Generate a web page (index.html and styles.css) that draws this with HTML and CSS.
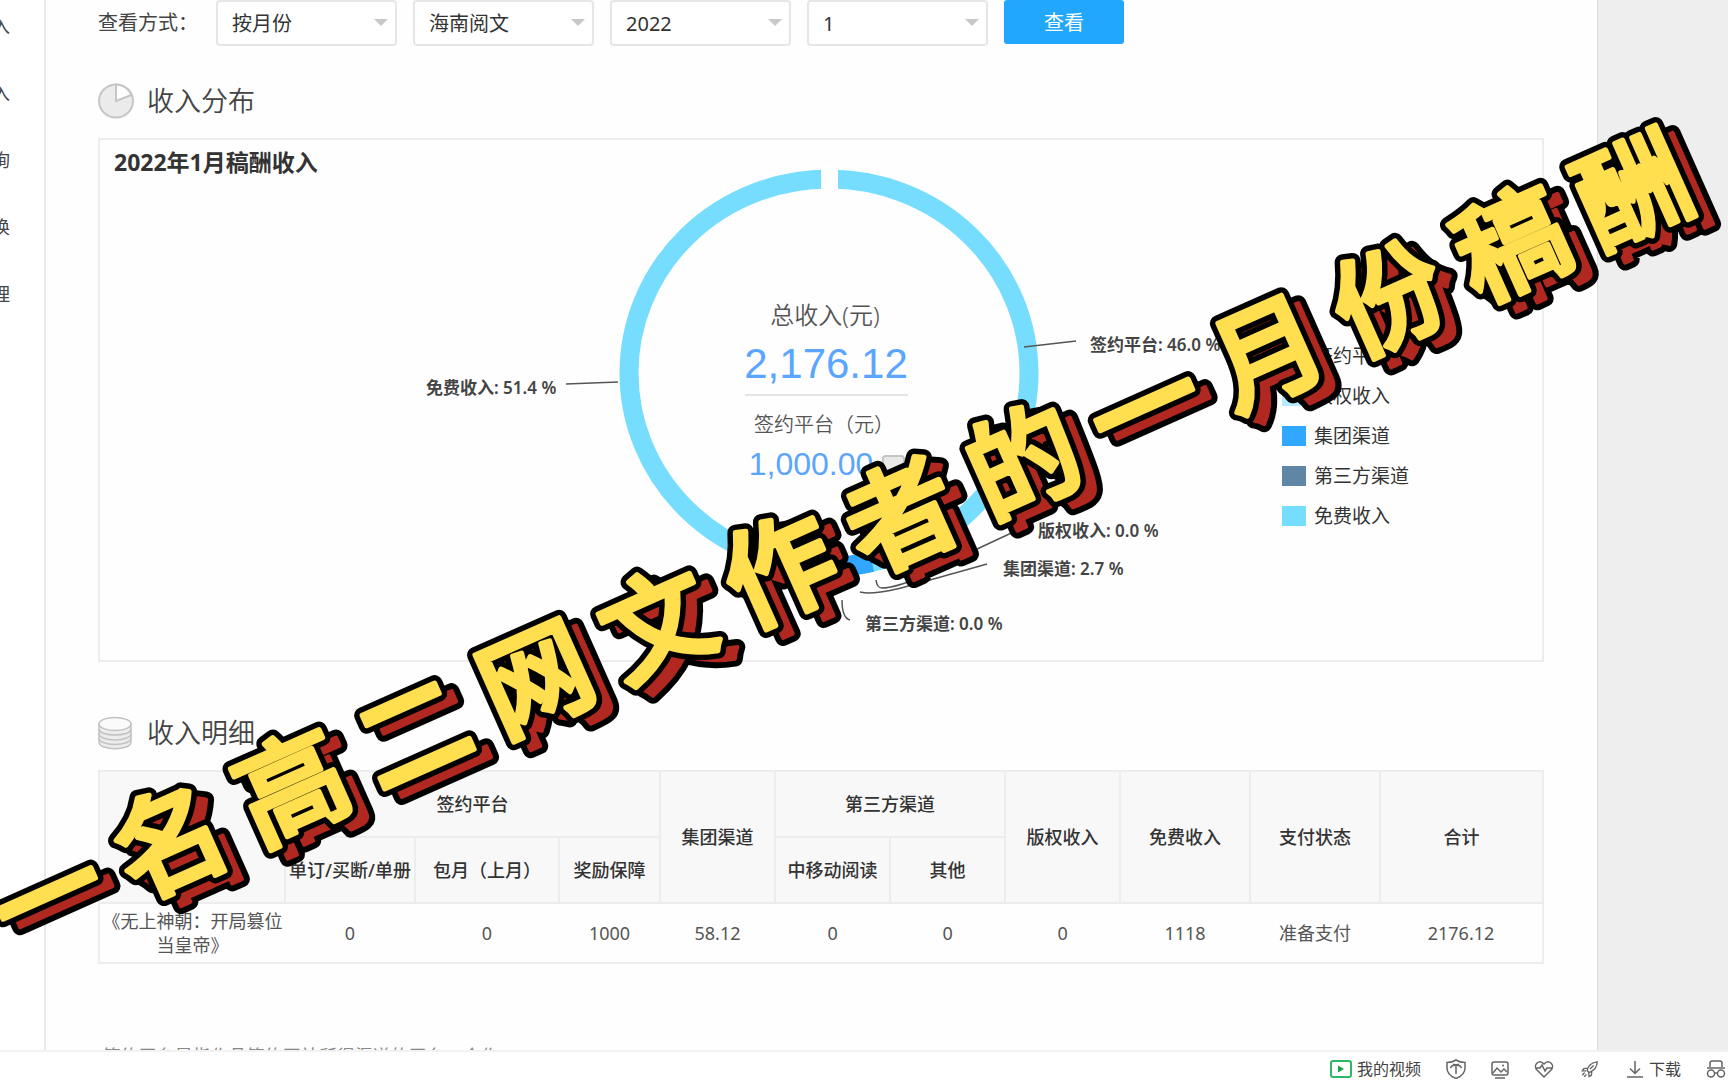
FILE: index.html
```html
<!DOCTYPE html>
<html lang="zh-CN">
<head>
<meta charset="utf-8">
<title>收入分布</title>
<link rel="stylesheet" href="styles.css">
</head>
<body>
<div class="workspace">
  <nav class="sidebar">
    <a href="#">月收入</a>
    <a href="#">总收入</a>
    <a href="#">查询</a>
    <a href="#">兑换</a>
    <a href="#">管理</a>
  </nav>
  <main class="main">
    <form class="filters">
      <label class="filters-label" for="mode">查看方式：</label>
      <span class="select"><select id="mode"><option>按月份</option></select></span>
      <span class="select"><select aria-label="公司"><option>海南阅文</option></select></span>
      <span class="select"><select aria-label="年份"><option>2022</option></select></span>
      <span class="select"><select aria-label="月份"><option>1</option></select></span>
      <button class="submit" type="button">查看</button>
    </form>

    <h2 class="section-title">
      <svg class="section-icon" viewBox="0 0 36 36" fill="none" stroke="#c6c6c6" stroke-width="2">
        <ellipse cx="18" cy="18" rx="17" ry="16.5" fill="#ebebeb"/>
        <path d="M18 1.5V18L33.500 12A17 16.500 0 0 0 18 1.500Z" fill="#fff"/>
      </svg>
      收入分布
    </h2>
    <section class="card">
      <svg class="chart" viewBox="100 140 1442 520">
        <ellipse cx="829" cy="373" rx="200" ry="194" fill="none" stroke="#77ddff" stroke-width="19"/>
        <path d="M832 567Q853 566 872 562" fill="none" stroke="#30a6ff" stroke-width="20"/>
        <rect x="821" y="165" width="17" height="28" fill="#fff"/>
        <g class="leader">
          <path d="M566 384L618 382"/>
          <path d="M1024 347L1076 341"/>
          <path d="M1024 527L975 550C940 570 900 588 882 588Q877 588 876 580"/>
          <path d="M987 564L955 573C920 582 880 597 860 592"/>
          <path d="M850 620Q842 618 842 600"/>
        </g>
        <g class="slice-label">
          <text x="426" y="394">免费收入: 51.4 %</text>
          <text x="1090" y="351">签约平台: 46.0 %</text>
          <text x="1038" y="537">版权收入: 0.0 %</text>
          <text x="1003" y="575">集团渠道: 2.7 %</text>
          <text x="865" y="630">第三方渠道: 0.0 %</text>
        </g>
        <g class="total">
          <text class="total-caption" x="825" y="324">总收入(元)</text>
          <text class="total-value" x="826" y="378">2,176.12</text>
          <path d="M745 395H908" stroke="#e6e6e6" stroke-width="2"/>
          <text class="part-caption" x="824" y="432">签约平台（元）</text>
          <text class="part-value" x="811" y="475">1,000.00</text>
          <rect x="883" y="456" width="21" height="18" rx="3" fill="#e9e9e9" stroke="#c4c4c4" stroke-width="2"/>
        </g>
      </svg>
      <h3 class="card-title">2022年1月稿酬收入</h3>
      <ul class="legend">
        <li><i class="swatch swatch-sign"></i>签约平台</li>
        <li><i class="swatch swatch-rights"></i>版权收入</li>
        <li><i class="swatch swatch-group"></i>集团渠道</li>
        <li><i class="swatch swatch-third"></i>第三方渠道</li>
        <li><i class="swatch swatch-sign"></i>免费收入</li>
      </ul>
    </section>

    <h2 class="section-title section-title-detail">
      <svg class="section-icon" viewBox="0 0 36 36" fill="#ececec" stroke="#c2c2c2" stroke-width="1.500">
        <path d="M1 9V27C1 36 33 36 33 27V9Z"/>
        <path d="M1 14C1 22 33 22 33 14M1 18.500C1 27 33 27 33 18.500M1 23C1 31.500 33 31.500 33 23" fill="none"/>
        <ellipse cx="17" cy="9" rx="16" ry="6.500" fill="#fafafa"/>
      </svg>
      收入明细
    </h2>
    <table class="details">
      <colgroup>
        <col class="col-book"><col class="col-order"><col class="col-monthly"><col class="col-bonus">
        <col class="col-channel"><col class="col-channel"><col class="col-channel"><col class="col-channel">
        <col class="col-status"><col class="col-status"><col>
      </colgroup>
      <thead>
        <tr>
          <th rowspan="2">作品</th>
          <th colspan="3">签约平台</th>
          <th rowspan="2">集团渠道</th>
          <th colspan="2">第三方渠道</th>
          <th rowspan="2">版权收入</th>
          <th rowspan="2">免费收入</th>
          <th rowspan="2">支付状态</th>
          <th rowspan="2">合计</th>
        </tr>
        <tr>
          <th>单订/买断/单册</th><th>包月（上月）</th><th>奖励保障</th><th>中移动阅读</th><th>其他</th>
        </tr>
      </thead>
      <tbody>
        <tr>
          <td>《无上神朝：开局篡位当皇帝》</td>
          <td>0</td><td>0</td><td>1000</td><td>58.12</td><td>0</td><td>0</td><td>0</td><td>1118</td><td>准备支付</td><td>2176.12</td>
        </tr>
      </tbody>
    </table>
    <p class="note">·签约平台是指作品签约网站所得渠道的平台，合作</p>
  </main>
  <div class="gutter"></div>
</div>

<footer class="statusbar">
  <a class="tool" href="#">
    <svg width="22" height="18" viewBox="0 0 22 18"><rect x="1" y="1" width="20" height="16" rx="2" fill="none" stroke="#2cb865" stroke-width="2"/><path d="M8 5.500L14 9L8 12.500Z" fill="#16a34a" stroke="none"/></svg>
    我的视频
  </a>
  <a class="tool" href="#" aria-label="安全">
    <svg width="20" height="20" viewBox="0 0 20 20"><path d="M10 1Q14 3.500 19 3.500V9Q19 16 10 19.500Q1 16 1 9V3.500Q6 3.500 10 1Z"/><path d="M10 15V7M4.500 9Q6 5.500 10 6.500Q14 5.500 15.500 9M7 5.500Q10 5 10 7Q10 5 13 5.500"/></svg>
  </a>
  <a class="tool" href="#" aria-label="图片">
    <svg width="18" height="20" viewBox="0 0 18 20"><rect x="1" y="3" width="16" height="13" rx="2"/><path d="M2 14L6 9L10 13L13 10L16 13M4 19H14M11 6.500H13"/></svg>
  </a>
  <a class="tool" href="#" aria-label="健康">
    <svg width="20" height="20" viewBox="0 0 20 20"><path d="M10 18L2.500 10.500C-1 6 5 -0.500 10 5C15 -0.500 21 6 17.500 10.500ZM2 9H6L8 6L11 12L13 9H18"/></svg>
  </a>
  <a class="tool" href="#" aria-label="加速">
    <svg width="22" height="18" viewBox="0 0 20 20"><path d="M7 12C7 7 12 2.500 18 2C18 8 14 12 9 14ZM8 9L3 9.500L1.500 12L6 12M12 13L11.500 17L9 18.500L8.500 14M4 14L1.500 17M6 16L3.500 18.500M10 10L14 6"/></svg>
  </a>
  <a class="tool" href="#">
    <svg width="18" height="18" viewBox="0 0 18 18"><path d="M9 1V13M4 8.500L9 13.500L14 8.500M1 17H17"/></svg>
    下载
  </a>
  <a class="tool" href="#" aria-label="无痕">
    <svg width="20" height="20" viewBox="0 0 20 20"><path d="M4 8V4Q4 2 6 2H14Q16 2 16 4V8M1 9H19M8 14H12"/><circle cx="5" cy="14.500" r="3.500"/><circle cx="15" cy="14.500" r="3.500"/></svg>
  </a>
</footer>

<svg class="banner" viewBox="0 0 1728 1080">
  <defs>
    <text id="banner-text" transform="translate(48 896) rotate(-24)" y="40" x="0 133 267 400 534 667 801 934 1068 1201 1335 1468 1602 1735">一名高二网文作者的一月份稿酬</text>
  </defs>
  <use class="banner-outline" href="#banner-text" x="17" y="8"/>
  <use class="banner-shade" href="#banner-text" x="17" y="8"/>
  <use class="banner-outline" href="#banner-text"/>
  <use class="banner-face" href="#banner-text"/>
</svg>
</body>
</html>
```
FILE: styles.css
```css
* { box-sizing: border-box; }

body {
  margin: 0;
  height: 100vh;
  display: flex;
  flex-direction: column;
  overflow: hidden;
  position: relative;
  background: #fff;
  color: #444;
  font: 18px/24px "Noto Sans", "Noto Sans CJK SC", sans-serif;
}

a { color: inherit; text-decoration: none; }

.workspace {
  flex: 1;
  min-height: 0;
  display: flex;
  overflow: hidden;
}

.sidebar {
  width: 46px;
  flex: none;
  display: flex;
  flex-direction: column;
  align-items: flex-end;
  gap: 43px;
  padding: 14px 34px 0 0;
  border-right: 2px solid #e8e8e8;
  white-space: nowrap;
}

.main {
  flex: 1;
  min-width: 0;
  padding: 0 53px 0 52px;
  background: #fefefe;
}

.gutter {
  width: 131px;
  flex: none;
  background: #eee;
  border-left: 1px solid #dcdcdc;
}

.filters {
  display: flex;
  gap: 16px;
  height: 46px;
  font-size: 20px;
}

.filters-label { width: 102px; line-height: 46px; white-space: nowrap; }

.select { position: relative; width: 181px; }

.select::after {
  content: "";
  position: absolute;
  right: 9px;
  top: 19px;
  border: 7px solid transparent;
  border-top-color: #c8c8c8;
  border-bottom: 0;
}

.select select {
  appearance: none;
  width: 100%;
  height: 46px;
  padding: 2px 14px 0;
  border: 2px solid #e6e6e6;
  border-radius: 4px;
  background: #fff;
  color: #333;
  font: inherit;
}

.submit {
  width: 120px;
  height: 44px;
  padding: 2px 0 0;
  border: 0;
  border-radius: 3px;
  background: #22a7ff;
  color: #fff;
  font: inherit;
}

.section-title {
  display: flex;
  align-items: center;
  gap: 13px;
  margin: 37px 0 19px;
  color: #444;
  font-size: 27px;
  font-weight: 350;
  line-height: 36px;
}

.section-title-detail { margin-top: 53px; }

.section-icon { width: 36px; height: 36px; }

.card {
  display: grid;
  border: 2px solid #ededed;
}

.card > * { grid-area: 1 / 1; }

.card-title {
  margin: 7px 14px;
  color: #333;
  font-size: 23px;
  line-height: 30px;
}

.chart { display: block; width: 100%; }

.leader { fill: none; stroke: #555; stroke-width: 1.5; }

.slice-label { fill: #444; font-size: 17px; font-weight: 600; }

.total { text-anchor: middle; fill: #555; font-weight: 350; }
.total-caption { font-size: 24px; }
.part-caption { font-size: 20px; }
.total-value, .part-value {
  fill: #5aa5ff;
  font-family: "Liberation Sans", sans-serif;
  font-weight: 400;
}
.total-value { font-size: 42px; }
.part-value { font-size: 32px; }

.legend {
  place-self: start end;
  display: flex;
  flex-direction: column;
  gap: 16px;
  width: 260px;
  margin: 204px 0 0;
  padding: 0;
  list-style: none;
  color: #333;
  font-size: 19px;
}

.legend li { display: flex; align-items: center; gap: 8px; }

.swatch { width: 24px; height: 20px; }
.swatch-sign { background: #77ddff; }
.swatch-rights { background: #b5ebff; }
.swatch-group { background: #30a6ff; }
.swatch-third { background: #5f86a5; }

.details {
  width: 100%;
  table-layout: fixed;
  border-collapse: collapse;
  border: 2px solid #ededed;
  text-align: center;
}

.col-book { width: 186px; }
.col-order { width: 130px; }
.col-monthly { width: 144px; }
.col-bonus { width: 101px; }
.col-channel { width: 115px; }
.col-status { width: 130px; }

.details th {
  height: 66px;
  padding: 0;
  border: 2px solid #ededed;
  background: #f8f8f8;
  color: #333;
  font-weight: 500;
  white-space: nowrap;
}

.details td { height: 60px; padding: 4px 2px; color: #555; }

.note { margin: 80px 0 0; white-space: nowrap; color: #888; }

.statusbar {
  flex: none;
  display: flex;
  align-items: center;
  justify-content: flex-end;
  gap: 25px;
  height: 30px;
  padding: 6px 2px 0 0;
  border-top: 2px solid #f2f2f2;
  background: #fff;
  font-size: 16px;
  line-height: 22px;
}

.tool { display: flex; align-items: center; gap: 5px; }

.tool svg { fill: none; stroke: #666; stroke-width: 1.5; }

.banner {
  position: absolute;
  inset: 0;
  width: 100%;
  pointer-events: none;
  font-family: "Noto Sans CJK SC", sans-serif;
  font-size: 110px;
  font-weight: 500;
  text-anchor: middle;
  stroke-linejoin: round;
}

.banner-outline { fill: #000; stroke: #000; stroke-width: 16px; }
.banner-shade { fill: #b0281f; stroke: #b0281f; stroke-width: 4px; }
.banner-face { fill: #ffdf4f; stroke: #ffdf4f; stroke-width: 5px; }
```
